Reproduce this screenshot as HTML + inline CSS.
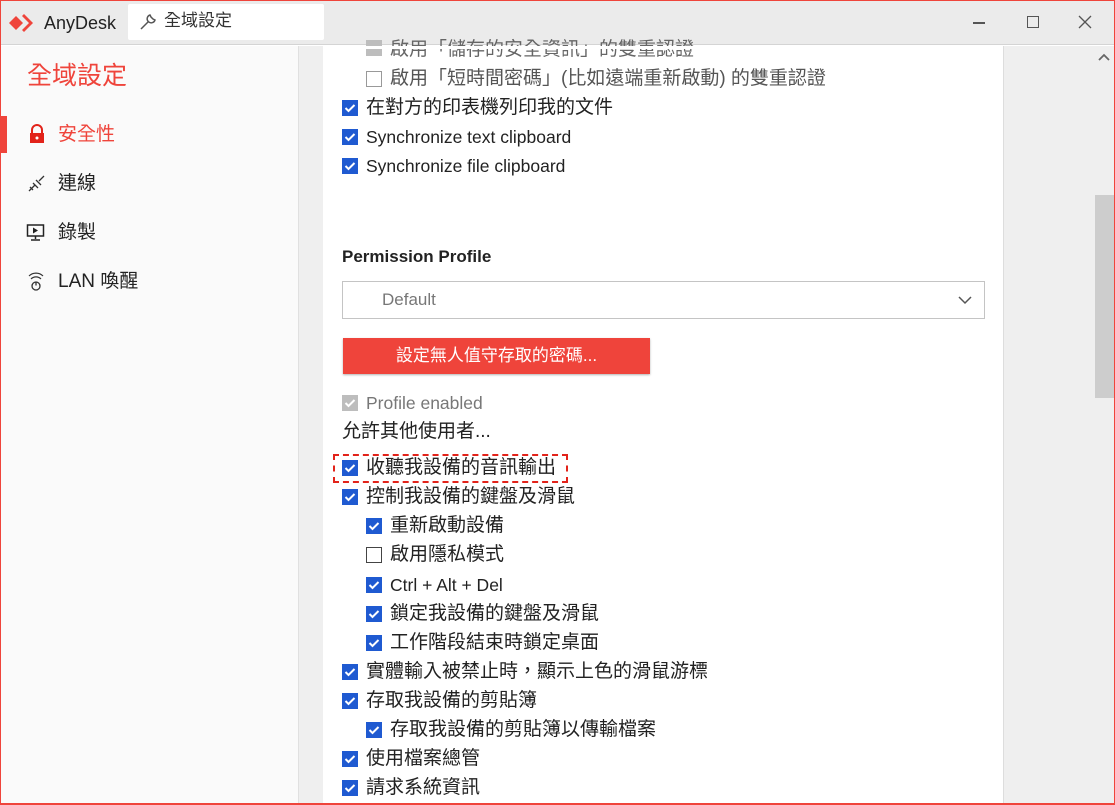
<!DOCTYPE html>
<html><head><meta charset="utf-8"><style>
*{margin:0;padding:0;box-sizing:border-box}
body{width:1115px;height:805px;overflow:hidden;background:#fff;font-family:"Liberation Sans","Noto Sans CJK TC",sans-serif;position:relative;color:#222}
.a{position:absolute}
.t{position:absolute;font-size:19px;line-height:22px;white-space:nowrap}
.cb{position:absolute;width:16px;height:16px;background:#1f5ad1}
.cb svg{position:absolute;left:0;top:0}
.ub{position:absolute;width:16px;height:16px;border:1.5px solid #444;background:#fff}
</style></head><body>
<div class="a" style="left:0;top:0;width:1115px;height:45px;background:#ebebeb;border-bottom:1px solid #d4d4d4"></div>
<svg class="a" style="left:8px;top:13px" width="30" height="20" viewBox="0 0 30 20"><path d="M1 10L8 3L15 10L8 17Z" fill="#ef443b"/><path d="M14 3l2-2 9 9-9 9-2-2 7-7z" fill="#ef443b"/></svg>
<div class="t" style="left:44px;top:12px;font-size:18px;color:#222">AnyDesk</div>
<div class="a" style="left:128px;top:4px;width:196px;height:36px;background:#fff;border-radius:2px"></div>
<svg class="a" style="left:138px;top:12px" width="20" height="20" viewBox="0 0 20 20"><path d="M3 17L10 10M12 3a4 4 0 1 0 5 5l-2-1-2-2-1-2z" fill="none" stroke="#555" stroke-width="1.5"/></svg>
<div class="t" style="left:164px;top:10px;font-size:17px;color:#333">全域設定</div>
<div class="a" style="left:973px;top:22px;width:12px;height:1.5px;background:#555"></div>
<div class="a" style="left:1027px;top:16px;width:12px;height:12px;border:1.5px solid #555"></div>
<svg class="a" style="left:1078px;top:15px" width="14" height="14"><path d="M1 1L13 13M13 1L1 13" stroke="#555" stroke-width="1.3"/></svg>
<div class="a" style="left:0;top:46px;width:298px;height:759px;background:#fafafa"></div>
<div class="a" style="left:298px;top:46px;width:25px;height:759px;background:#efefef;border-left:1px solid #e0e0e0"></div>
<div class="t" style="left:27px;top:61px;font-size:25px;line-height:30px;color:#ef443b">全域設定</div>
<div class="a" style="left:0;top:116px;width:7px;height:37px;background:#ef443b"></div>
<svg class="a" style="left:28px;top:124px" width="18" height="20" viewBox="0 0 18 20"><path d="M4 9V6a5 5 0 0 1 10 0v3" fill="none" stroke="#e2231a" stroke-width="2"/><rect x="2" y="9" width="14" height="10" fill="#e2231a"/><circle cx="9" cy="14" r="1.5" fill="#fff"/></svg>
<div class="t" style="left:58px;top:124px;color:#ef443b">安全性</div>
<svg class="a" style="left:27px;top:174px" width="20" height="20" viewBox="0 0 20 20"><path d="M2 17L8 11M12 7l5-5M6 9l5 5M9 6l5 5M3 13l3 3" stroke="#333" stroke-width="1.3" fill="none"/></svg>
<div class="t" style="left:58px;top:173px">連線</div>
<svg class="a" style="left:26px;top:223px" width="20" height="20" viewBox="0 0 20 20"><rect x="1.5" y="2" width="16" height="11" fill="none" stroke="#222" stroke-width="1.5"/><path d="M7 4.5v6l5-3z" fill="#222"/><path d="M9.5 13v3M5 17h9" stroke="#222" stroke-width="1.5"/></svg>
<div class="t" style="left:58px;top:222px">錄製</div>
<svg class="a" style="left:26px;top:270px" width="20" height="22" viewBox="0 0 20 22"><path d="M3 6a10 10 0 0 1 14 0M5 9a7 7 0 0 1 10 0" stroke="#333" stroke-width="1.2" fill="none"/><circle cx="10" cy="16" r="4" fill="none" stroke="#333" stroke-width="1.3"/><path d="M10 12.5v3" stroke="#333" stroke-width="1.3"/></svg>
<div class="t" style="left:58px;top:271px">LAN 喚醒</div>
<div class="a" style="left:1003px;top:46px;width:112px;height:759px;background:#efefef;border-left:1px solid #ddd"></div>
<div class="a" style="left:1095px;top:195px;width:19px;height:203px;background:#cdcdcd"></div>
<svg class="a" style="left:1097px;top:52px" width="14" height="10"><path d="M2 8L7 3L12 8" stroke="#666" stroke-width="1.8" fill="none"/></svg>

<div class="a" style="left:366px;top:40px;width:16px;height:16px;background:#bdbdbd"></div>
<div class="t" style="left:390px;top:39px;color:#666">啟用「儲存的安全資訊」的雙重認證</div>
<div class="a" style="left:323px;top:46px;width:680px;height:3px;background:#fff"></div>
<div class="ub" style="left:366px;top:71px;border-color:#999"></div>
<div class="t" style="left:390px;top:68px;color:#555">啟用「短時間密碼」(比如遠端重新啟動) 的雙重認證</div>

<div id="rows"></div>
<div class="t" style="left:342px;top:246px;font-weight:bold;font-size:17px">Permission Profile</div>
<div class="a" style="left:342px;top:281px;width:643px;height:38px;border:1px solid #c4c4c4"></div>
<div class="t" style="left:382px;top:289px;font-size:17px;color:#777">Default</div>
<svg class="a" style="left:958px;top:295px" width="14" height="10"><path d="M1 2L7 8L13 2" stroke="#555" stroke-width="1.5" fill="none"/></svg>
<div class="a" style="left:343px;top:338px;width:307px;height:36px;background:#ef443b;box-shadow:0 1px 2px rgba(0,0,0,.3)"></div>
<div class="t" style="left:343px;top:345px;width:307px;text-align:center;color:#fff;font-size:17px">設定無人值守存取的密碼...</div>
<div class="a" style="left:342px;top:395px;width:16px;height:16px;background:#bdbdbd"><svg width="16" height="16"><path d="M3.5 8l3 3 6-6" stroke="#fff" stroke-width="2" fill="none"/></svg></div>
<div class="t" style="left:366px;top:392px;color:#777;font-size:17.5px">Profile enabled</div>
<div class="t" style="left:342px;top:421px">允許其他使用者...</div>
<div class="a" style="left:333px;top:454px;width:235px;height:29px;border:2px dashed #e2231a"></div>

<script>
var R=[[342,108,"在對方的印表機列印我的文件"],[342,137,"Synchronize text clipboard"],[342,166,"Synchronize file clipboard"],
[342,468,"收聽我設備的音訊輸出"],[342,497,"控制我設備的鍵盤及滑鼠"],[366,526,"重新啟動設備"],[366,555,"啟用隱私模式",1],[366,585,"Ctrl + Alt + Del"],[366,614,"鎖定我設備的鍵盤及滑鼠"],[366,643,"工作階段結束時鎖定桌面"],[342,672,"實體輸入被禁止時，顯示上色的滑鼠游標"],[342,701,"存取我設備的剪貼簿"],[366,730,"存取我設備的剪貼簿以傳輸檔案"],[342,759,"使用檔案總管"],[342,788,"請求系統資訊"]];
var h="";R.forEach(function(r){var y=r[1]-8;
h+=r[3]?'<div class="ub" style="left:'+r[0]+'px;top:'+y+'px"></div>':'<div class="cb" style="left:'+r[0]+'px;top:'+y+'px"><svg width="16" height="16"><path d="M3.5 8l3 3 6-6" stroke="#fff" stroke-width="2" fill="none"/></svg></div>';
h+='<div class="t" style="left:'+(r[0]+24)+'px;top:'+(r[1]-11)+'px;'+(r[2].indexOf("Sync")==0||r[2].indexOf("Ctrl")==0?'font-size:17.5px':'')+'">'+r[2]+'</div>';});
document.getElementById("rows").outerHTML=h;
</script>
<div class="a" style="left:0;top:0;width:1115px;height:805px;border:1px solid #ef443b;border-bottom-width:2px;pointer-events:none"></div>
</body></html>
